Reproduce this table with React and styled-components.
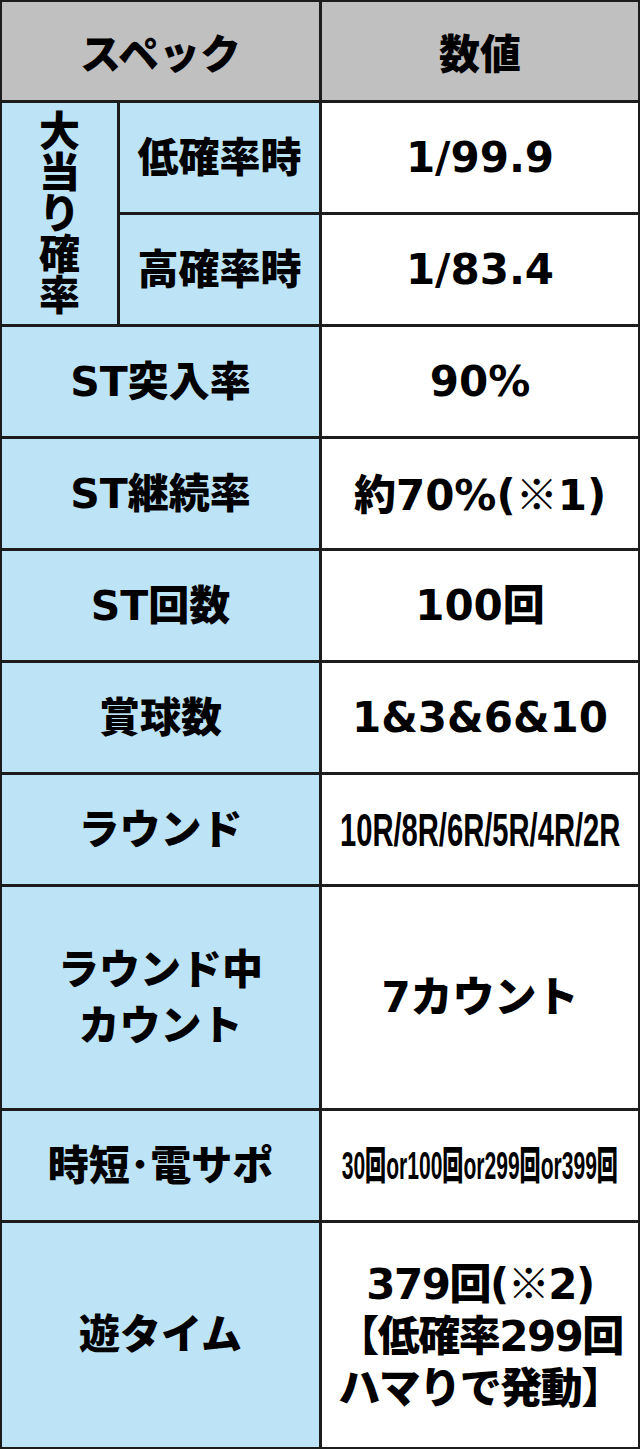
import styled, { createGlobalStyle } from "styled-components";

const GlobalStyle = createGlobalStyle`
	html, body {
		margin: 0;
		padding: 0;
		background: #ffffff;
	}
	body {
		font-family: "DejaVu Sans", "Noto Sans CJK JP", sans-serif;
		color: #000;
	}
`;

const App = () => {
	return (
		<>
			<GlobalStyle />
			<SpecTable>
				<HeadCell $span={2}>スペック</HeadCell>
				<HeadCell>数値</HeadCell>

				<GroupCell>
					<VerticalText>大当り確率</VerticalText>
				</GroupCell>
				<LabelCell>低確率時</LabelCell>
				<ValueCell>1/99.9</ValueCell>
				<LabelCell>高確率時</LabelCell>
				<ValueCell>1/83.4</ValueCell>

				{rows.map((row) => (
					<Row key={row.label} {...row} />
				))}
			</SpecTable>
		</>
	);
};

const Row = ({ label, value, narrow, tight }) => (
	<>
		<LabelCell $span={2}>{label}</LabelCell>
		<ValueCell $tight={tight}>
			{narrow ? (
				<Narrow $scale={narrow.scale} $size={narrow.size}>
					{value}
				</Narrow>
			) : (
				<span>{value}</span>
			)}
		</ValueCell>
	</>
);

const SpecTable = styled.div`
	display: grid;
	grid-template-columns: 115px 199px 316px;
	grid-template-rows: 98px repeat(7, 109px) 221px 109px 224px;
	gap: 3px;
	padding: 2px 2px 0 2px;
	width: 640px;
	height: 1449px;
	box-sizing: border-box;
	background: #1c1c1c;
`;

const Cell = styled.div`
	display: flex;
	align-items: center;
	justify-content: center;
	text-align: center;
	font-weight: 900;
	white-space: pre-line;
	grid-column: span ${(props) => props.$span || 1};
`;

const HeadCell = styled(Cell)`
	background: #c0c0c0;
	font-size: 41px;
`;

const LabelCell = styled(Cell)`
	background: #bde3f7;
	font-size: 41px;
	line-height: 56px;
`;

const GroupCell = styled(Cell)`
	grid-row: span 2;
	background: #bde3f7;
`;

const VerticalText = styled.span`
	display: block;
	width: 1em;
	font-size: 41px;
	line-height: 41px;
	word-break: break-all;
	padding-top: 2px;
`;

const ValueCell = styled(Cell)`
	background: #ffffff;
	font-size: 42px;
	line-height: 52px;
	letter-spacing: ${(props) => (props.$tight ? "-1.5px" : "0")};
`;

const Mark = styled.span`
	font-family: "Noto Sans CJK JP", sans-serif;
	font-weight: 400;
`;

const Narrow = styled.span`
	display: inline-block;
	white-space: nowrap;
	font-family: "Liberation Sans", "Noto Sans CJK JP", sans-serif;
	font-size: ${(props) => props.$size}px;
	transform: scaleX(${(props) => props.$scale});
`;

export default App;

const rows = [
	{ label: "ST突入率", value: "90%" },
	{ label: "ST継続率", value: <>約70%(<Mark>※</Mark>1)</> },
	{ label: "ST回数", value: "100回" },
	{ label: "賞球数", value: "1&3&6&10" },
	{ label: "ラウンド", value: "10R/8R/6R/5R/4R/2R", narrow: { size: 46, scale: 0.634 } },
	{ label: "ラウンド中\nカウント", value: "7カウント" },
	{ label: "時短･電サポ", value: "30回or100回or299回or399回", narrow: { size: 39, scale: 0.54 } },
	{
		label: "遊タイム",
		value: <>379回(<Mark>※</Mark>2){"\n"}【低確率299回{"\n"}ハマりで発動】</>,
		tight: true,
	},
];
